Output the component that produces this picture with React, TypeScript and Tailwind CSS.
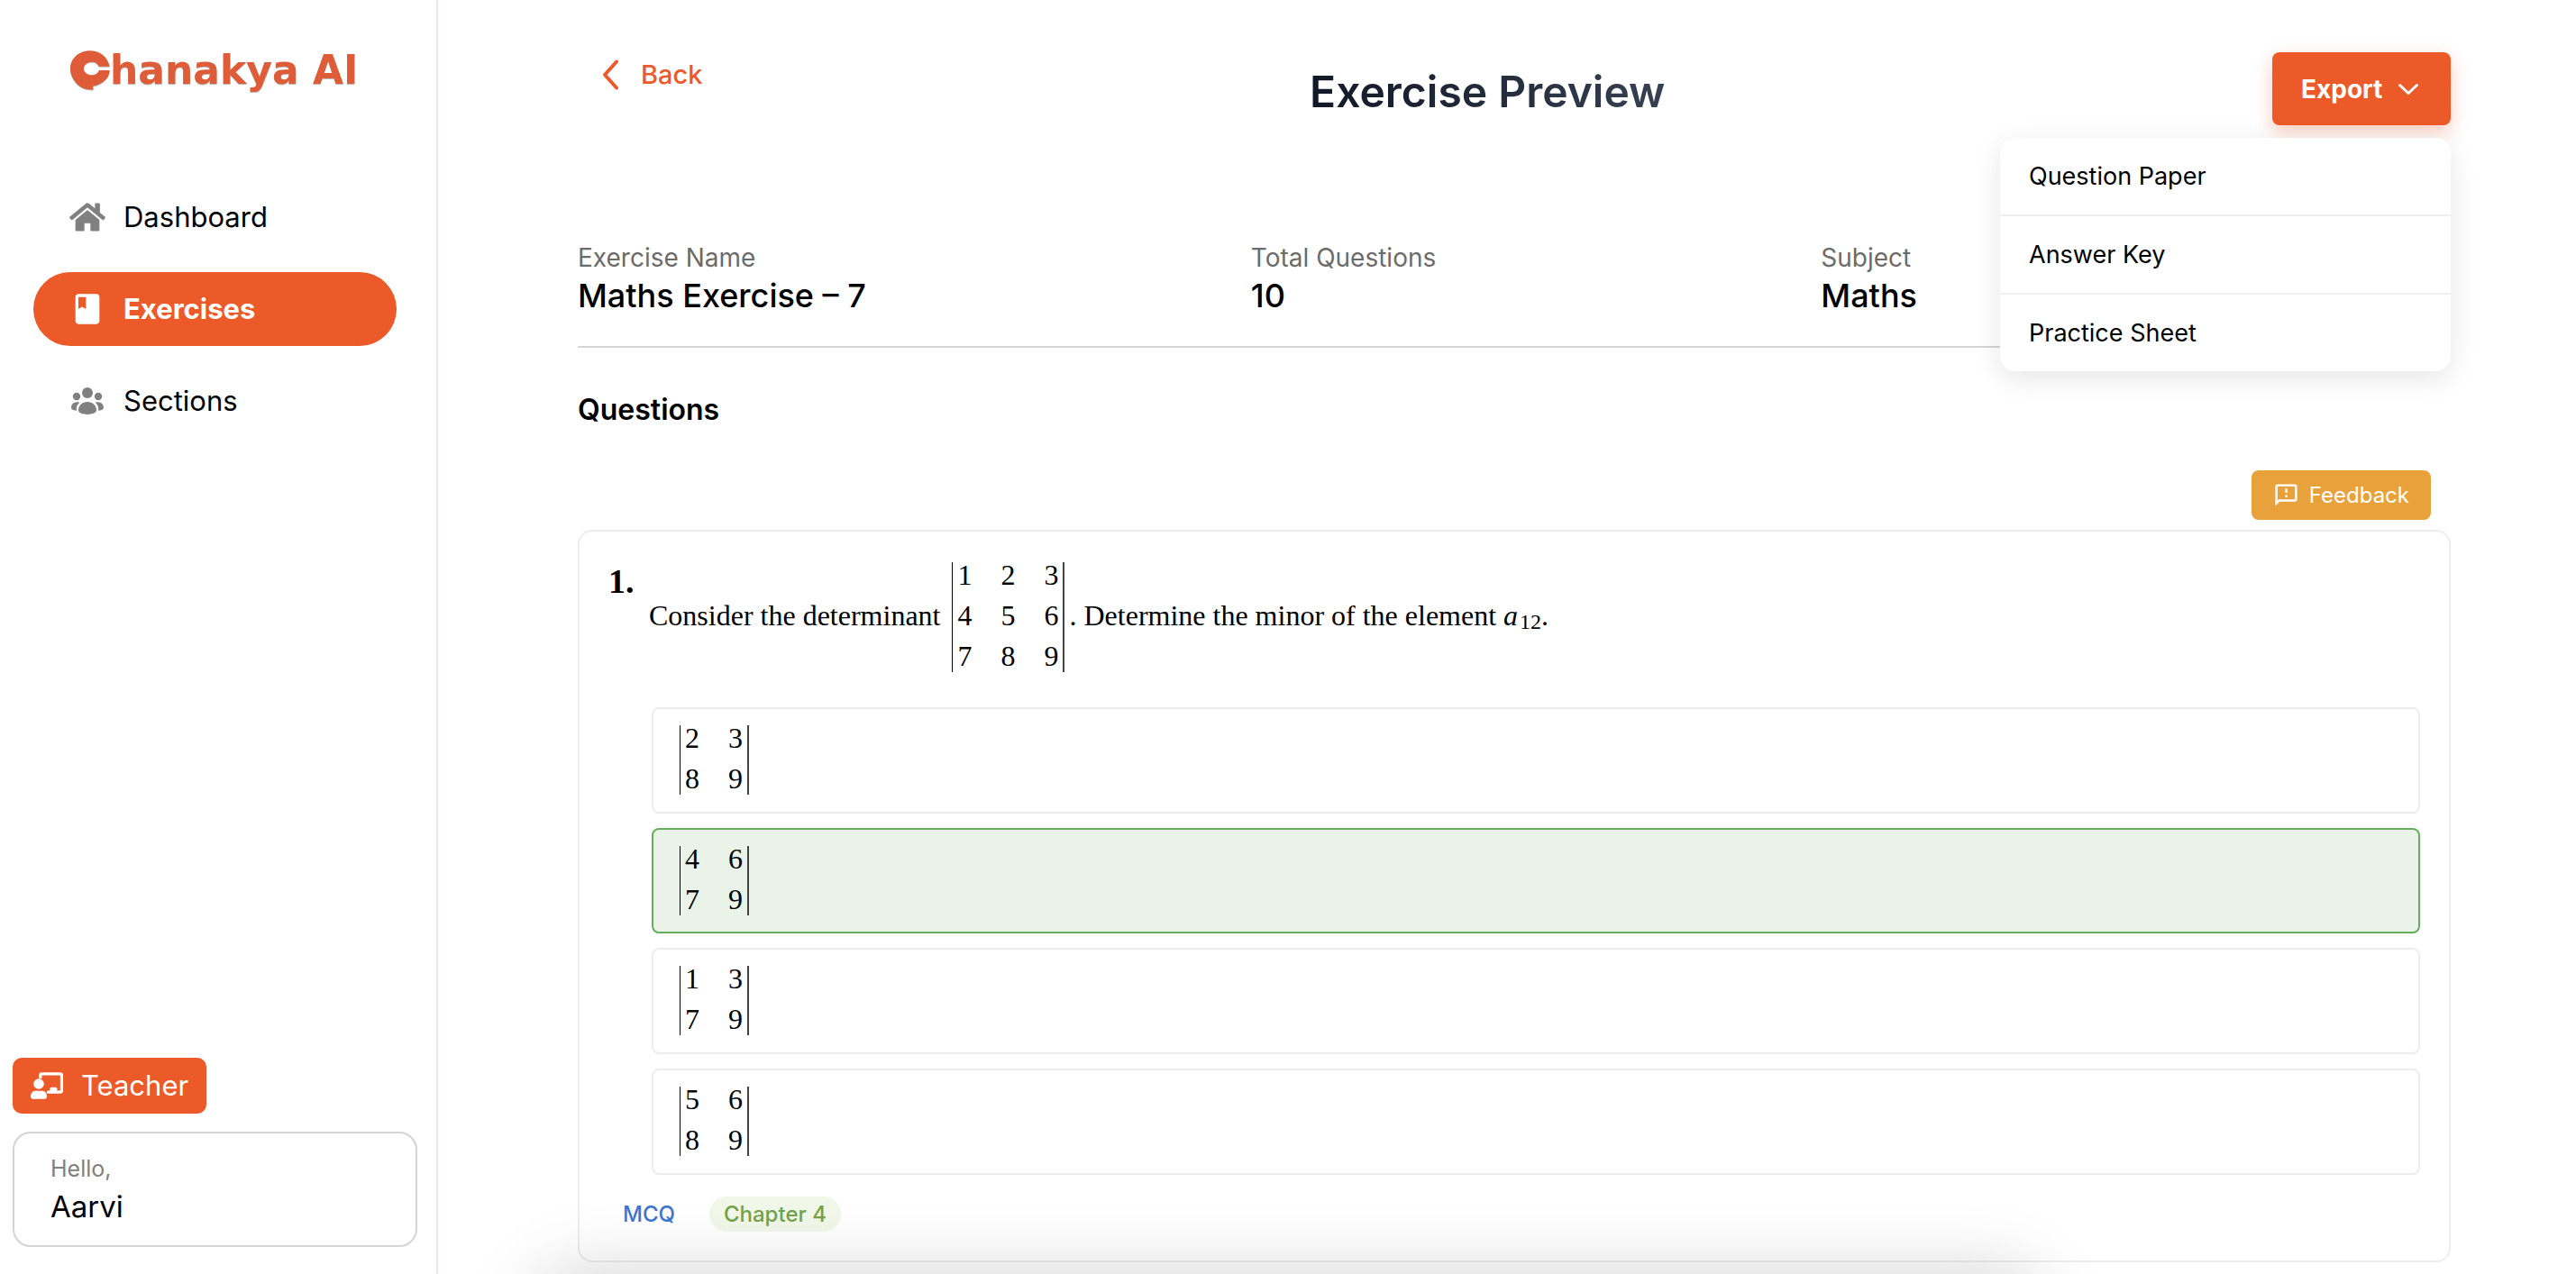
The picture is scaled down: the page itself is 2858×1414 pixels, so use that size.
import { useState } from "react";
import { FaHome } from "react-icons/fa";
import { MdClass, MdOutlineFeedback } from "react-icons/md";

function LogoMark() {
  return (
    <svg viewBox="0 0 133 132" className="h-11 w-11 shrink-0" fill="currentColor" aria-hidden="true">
      <path d="M66 0C100 0 125 20 132 53H96C92 44 84 38 72 38C57 38 45 48 45 60C45 72 57 82 72 82C84 82 92 76 97 66H132C131 92 108 114 76 119L77 131C55 131 40 127 26 115C8 97 0 80 0 60C0 25 30 0 66 0Z" />
    </svg>
  );
}

function GroupIcon() {
  return (
    <svg viewBox="0 0 108 90" className="h-[30px] w-9" fill="currentColor" aria-hidden="true">
      <circle cx="54" cy="18" r="18" />
      <circle cx="18" cy="30" r="12.5" />
      <circle cx="90" cy="30" r="12.5" />
      <path d="M54 48C71 48 84 60 84 76C84 85 70 90 54 90C38 90 24 85 24 76C24 60 37 48 54 48Z" />
      <path d="M28 50C19 57 16 66 18 77C8 77 0 74 0 67C0 55 11 45 28 50Z" />
      <path d="M80 50C89 57 92 66 90 77C100 77 108 74 108 67C108 55 97 45 80 50Z" />
    </svg>
  );
}

function TeacherIcon() {
  return (
    <svg viewBox="0 0 108 90" className="h-[30px] w-9" fill="currentColor" aria-hidden="true">
      <path
        d="M32.500 17V10Q32.500 5.500 37 5.500H98Q103.500 5.500 103.500 11V61Q103.500 66.500 98 66.500H58"
        fill="none"
        stroke="currentColor"
        strokeWidth="10"
        strokeLinecap="round"
      />
      <path d="M64 66V55Q64 50 69 50H83Q88 50 88 55V66Z" />
      <circle cx="27" cy="39" r="17.500" />
      <path d="M16 62H38C48 62 54 70 54 80Q54 89 46 89H8Q0 89 0 80C0 70 6 62 16 62Z" />
    </svg>
  );
}

function Chevron({ className, d, viewBox, width }: { className: string; d: string; viewBox: string; width: number }) {
  return (
    <svg viewBox={viewBox} className={className} fill="none" stroke="currentColor" strokeWidth={width} strokeLinecap="round" strokeLinejoin="round" aria-hidden="true">
      <path d={d} />
    </svg>
  );
}

function Determinant({ rows }: { rows: number[][] }) {
  return (
    <div className="flex w-fit flex-col gap-[17px] border-r-2 border-l border-l-black border-r-[#444] px-[5px] pb-1 leading-7">
      {rows.map((row, i) => (
        <div key={i} className="flex gap-8">
          {row.map((n, j) => (
            <span key={j}>{n}</span>
          ))}
        </div>
      ))}
    </div>
  );
}

const navItems = [
  { label: "Dashboard", icon: <FaHome size={40} />, active: false },
  { label: "Exercises", icon: <MdClass size={40} />, active: true },
  { label: "Sections", icon: <GroupIcon />, active: false },
];

const details = [
  { label: "Exercise Name", value: "Maths Exercise – 7" },
  { label: "Total Questions", value: "10" },
  { label: "Subject", value: "Maths" },
];

const options = [
  { rows: [[2, 3], [8, 9]], correct: false },
  { rows: [[4, 6], [7, 9]], correct: true },
  { rows: [[1, 3], [7, 9]], correct: false },
  { rows: [[5, 6], [8, 9]], correct: false },
];

function Sidebar() {
  return (
    <aside className="flex w-[486px] shrink-0 flex-col border-r-2 border-[#e2e8f0] pb-[30px]">
      <a href="#home" className="mt-14 ml-[78px] flex h-11 items-center text-[#de5d38] drop-shadow-[0_1px_0_#bbb]">
        <LogoMark />
        <span className="font-['DejaVu_Sans',sans-serif] text-[44px] leading-[44px] font-bold">hanakya AI</span>
      </a>
      <nav className="mt-[100px] mr-11 ml-[37px] flex flex-col gap-5">
        {navItems.map((item) => (
          <a
            key={item.label}
            href={`#${item.label.toLowerCase()}`}
            className={
              item.active
                ? "flex h-[82px] items-center gap-5 rounded-full bg-[#eb5a28] pl-10 text-[31px] font-bold text-white"
                : "flex h-[82px] items-center gap-5 rounded-full pl-10 text-[31px] text-black"
            }
          >
            <span className={item.active ? "flex w-10 justify-center" : "flex w-10 justify-center text-[#808080]"}>{item.icon}</span>
            {item.label}
          </a>
        ))}
      </nav>
      <div className="mt-auto mr-[21px] ml-[14px] flex flex-col items-start gap-5">
        <button type="button" className="flex h-[62px] items-center gap-5 rounded-[10px] bg-[#eb5a28] px-5 text-[31px] text-white">
          <TeacherIcon />
          Teacher
        </button>
        <div className="w-full rounded-[20px] border-2 border-[#d4d4d4] px-10 pt-[18px] pb-[22px]">
          <p className="text-[25px] leading-[42px] text-[#808080]">Hello,</p>
          <p className="text-[33px] leading-[42px] text-black">Aarvi</p>
        </div>
      </div>
    </aside>
  );
}

function ExportMenu() {
  const [open, setOpen] = useState(true);
  return (
    <div className="relative">
      <button
        type="button"
        aria-expanded={open}
        onClick={() => setOpen(!open)}
        className="flex h-[81px] w-[198px] items-center gap-[17px] rounded-lg bg-[#eb5a28] pl-8 text-[28px] font-bold text-white shadow-[0_8px_20px_rgba(235,90,40,0.3)]"
      >
        Export
        <Chevron className="h-[14px] w-6" viewBox="0 0 24 14" d="M2.500 2.500L12 11.500L21.500 2.500" width={3} />
      </button>
      {open && (
        <div className="absolute top-[95px] right-0 z-10 flex w-[500px] flex-col divide-y-2 divide-[#efefef] overflow-hidden rounded-2xl bg-white shadow-[0_8px_30px_rgba(0,0,0,0.1)]">
          {["Question Paper", "Answer Key", "Practice Sheet"].map((label) => (
            <button key={label} type="button" className="px-8 py-[22px] text-left text-[27px] leading-[41px] text-black">
              {label}
            </button>
          ))}
        </div>
      )}
    </div>
  );
}

function QuestionCard() {
  return (
    <section className="mt-[11px] rounded-2xl border-2 border-[#ededed] px-8 pt-8 pb-8 font-['Liberation_Serif',serif] text-[32px] text-black">
      <div className="flex items-start">
        <span className="w-[45px] text-[38px] leading-[46px] font-bold">1.</span>
        <div className="flex items-center pt-[2px]">
          <span className="pb-1">Consider the determinant</span>
          <div className="mr-[5px] ml-[13px]">
            <Determinant rows={[[1, 2, 3], [4, 5, 6], [7, 8, 9]]} />
          </div>
          <span className="pb-1">
            . Determine the minor of the element <i>a</i>
            <sub className="bottom-[-4px] ml-[2px] text-2xl leading-none">12</sub>.
          </span>
        </div>
      </div>
      <ul className="mt-[39px] ml-12 flex flex-col gap-4">
        {options.map((option, i) => (
          <li
            key={i}
            className={
              option.correct
                ? "rounded-lg border-2 border-[#66ae5e] bg-[#e9f3e8] px-[29px] py-[18px]"
                : "rounded-lg border-2 border-[#ededed] px-[29px] pt-[18px] pb-[19px]"
            }
          >
            <Determinant rows={option.rows} />
          </li>
        ))}
      </ul>
      <div className="mt-6 ml-4 flex items-center gap-[38px] font-['Inter',sans-serif] text-2xl leading-[39px] font-medium">
        <span className="text-[#3b76d2]">MCQ</span>
        <span className="rounded-full bg-[#f1f7e9] px-4 text-[#74a24b]">Chapter 4</span>
      </div>
    </section>
  );
}

export default function App() {
  return (
    <div className="flex min-h-screen bg-white font-['Inter',sans-serif]">
      <Sidebar />
      <main className="min-w-0 flex-1 pt-[58px] pr-[139px] pl-[155px]">
        <header className="flex items-start justify-between">
          <button type="button" className="flex h-[50px] items-center gap-6 pl-[26px] text-[29px] font-medium text-[#eb5a28]">
            <Chevron className="h-9 w-5" viewBox="0 0 20 36" d="M17 3.500L4 18L17 32.500" width={4} />
            Back
          </button>
          <h1 className="mt-3 bg-linear-to-r from-[#111827] to-[#374151] bg-clip-text text-5xl leading-[64px] font-semibold text-transparent">
            Exercise Preview
          </h1>
          <ExportMenu />
        </header>
        <dl className="mt-[126px] flex justify-between border-b-2 border-[#d4d4d4] pb-[35px] leading-[42px]">
          {details.map((d) => (
            <div key={d.label}>
              <dt className="text-[28px] text-[#6b6b6b]">{d.label}</dt>
              <dd className="text-4xl leading-[42px] font-medium text-black">{d.value}</dd>
            </div>
          ))}
          <div className="w-[165px]" />
        </dl>
        <h2 className="mt-12 text-[32px] leading-[42px] font-semibold text-black">Questions</h2>
        <div className="mt-[46px] mr-[22px] flex justify-end">
          <button type="button" className="flex h-[55px] items-center gap-[11px] rounded-lg bg-[#e9a23b] px-6 text-2xl text-white">
            <MdOutlineFeedback size={29} />
            Feedback
          </button>
        </div>
        <QuestionCard />
      </main>
      <div className="pointer-events-none fixed inset-x-0 -bottom-40 mx-auto h-40 w-[58%] rounded-3xl shadow-[0_0_80px_rgba(0,0,0,0.18)]" />
    </div>
  );
}
